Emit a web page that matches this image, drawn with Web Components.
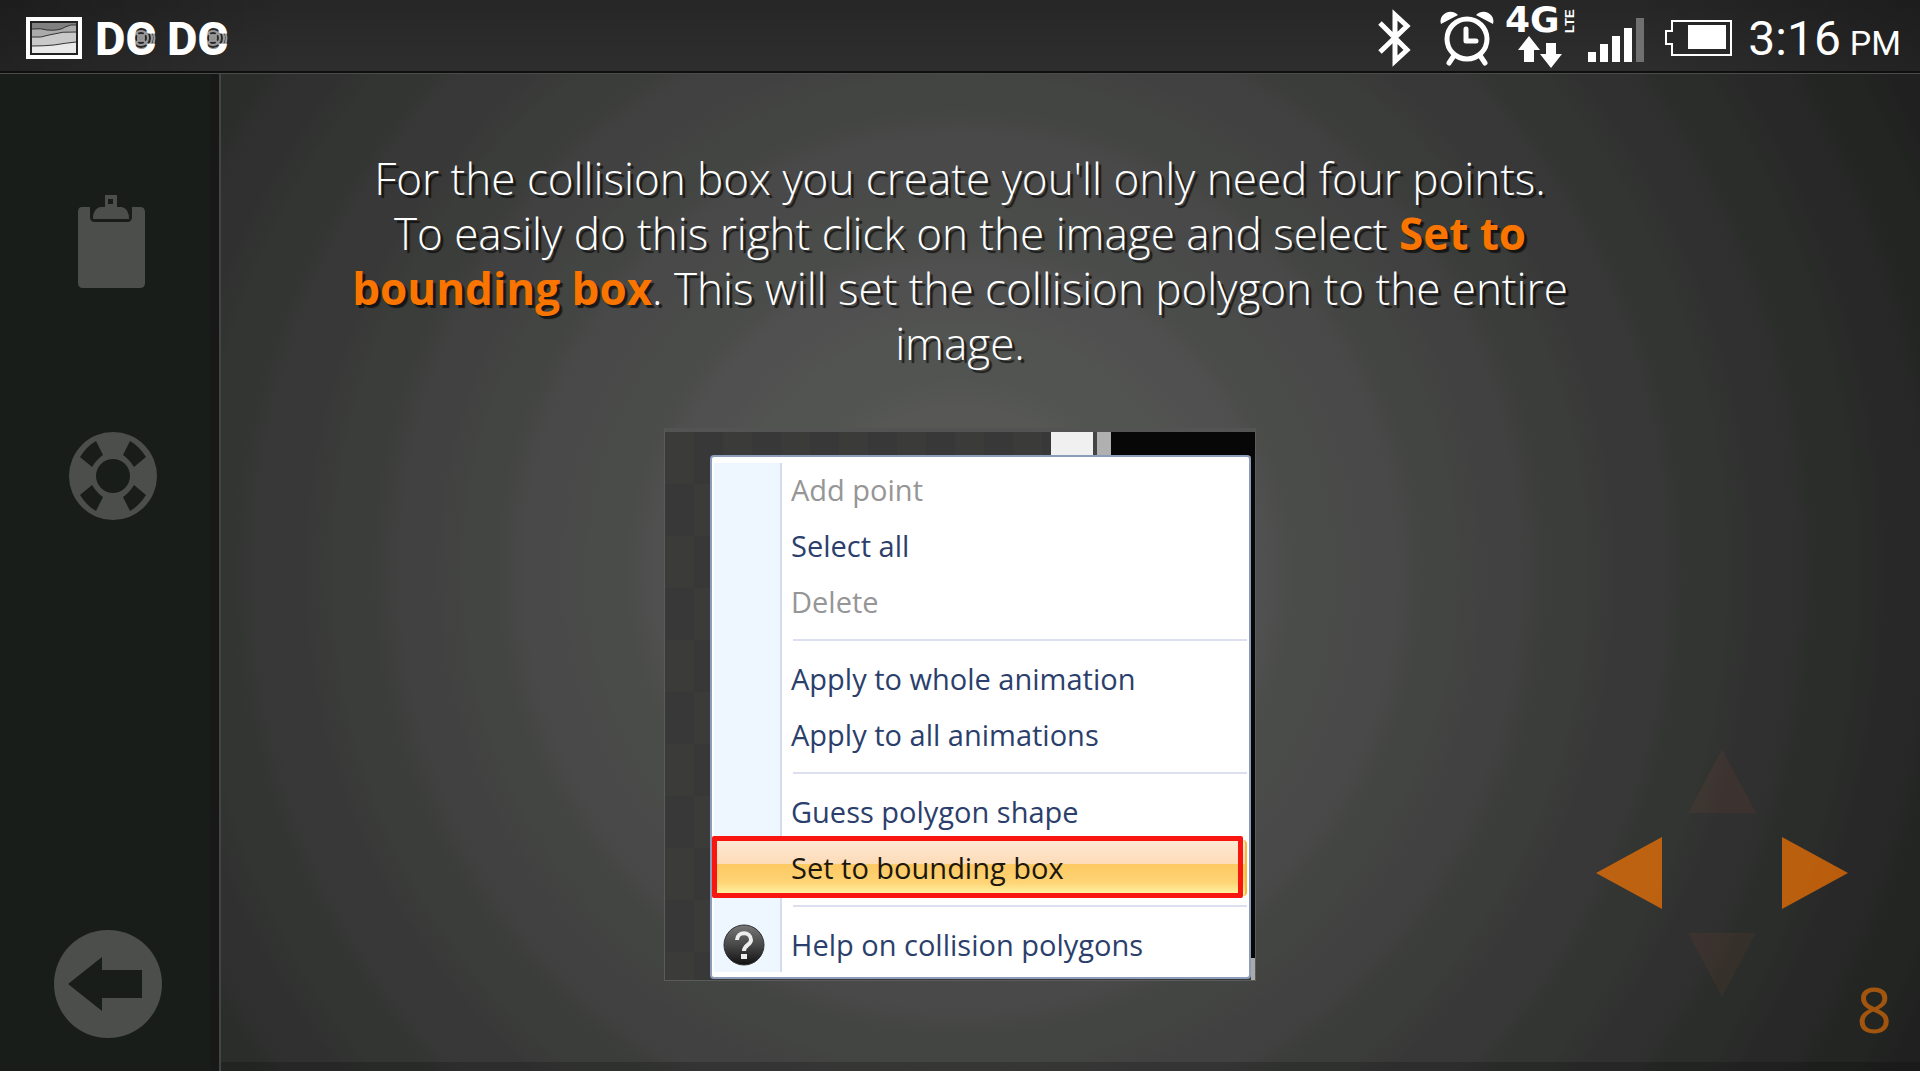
<!DOCTYPE html>
<html lang="en">
<head>
<meta charset="utf-8">
<title>Collision polygon tutorial</title>
<style>
	html, body { height: 100%; margin: 0; }

	body {
		background: white;
		box-sizing: border-box;
		display: flex;
		flex-direction: column;
		font-family: "Open Sans", "Noto Sans", sans-serif;
		padding-bottom: 9px;
	}
</style>
</head>
<body>
<status-bar time="3:16" period="PM"></status-bar>
<tutorial-stage>
	<tool-rail slot="rail"></tool-rail>
	<p>For the collision box you create you'll only need four points. To easily do this right click on the image and select <b>Set to bounding box</b>. This will set the collision polygon to the entire image.</p>
	<editor-shot>
		<menu-item disabled>Add point</menu-item>
		<menu-item>Select all</menu-item>
		<menu-item disabled>Delete</menu-item>
		<menu-line></menu-line>
		<menu-item>Apply to whole animation</menu-item>
		<menu-item>Apply to all animations</menu-item>
		<menu-line></menu-line>
		<menu-item>Guess polygon shape</menu-item>
		<menu-item marked>Set to bounding box</menu-item>
		<menu-line></menu-line>
		<menu-item help>Help on collision polygons</menu-item>
	</editor-shot>
	<page-pad slot="pad" page="8"></page-pad>
</tutorial-stage>

<script>
/**
 * Phone status bar: notifications on the left, system icons and clock on the right.
 * @attribute time   The clock digits
 * @attribute period AM or PM
 */
class StatusBar extends HTMLElement {
	constructor() {
		super();
		this.attachShadow({mode: 'open'});
		const logo = `
			<svg width="60" height="40" viewBox="0 0 60 40" fill="white" font-family="Roboto, sans-serif" font-weight="800" font-size="47">
				<g fill="none" stroke="#999" stroke-width="2">
					<circle cx="43" cy="20" r="3"/>
					<circle cx="43" cy="20" r="7"/>
					<circle cx="43" cy="20" r="11"/>
					<path d="M36 13l14 14M50 13L36 27M54 11q5 9 0 18"/>
				</g>
				<text x="-3" y="37">DC</text>
			</svg>`;
		this.shadowRoot.innerHTML = `
			<style>
				:host {
					align-items: center;
					background: linear-gradient(90deg, rgba(0,0,0,.25), transparent 15% 85%, rgba(0,0,0,.25)), linear-gradient(#262626, #2e2e2e);
					border-bottom: 2px solid #0e0f0e;
					box-sizing: border-box;
					color: white;
					display: flex;
					flex: none;
					font-family: Roboto, sans-serif;
					height: 73px;
					justify-content: space-between;
					padding: 4px 19px 0 26px;
				}

				div { align-items: center; display: flex; }
				svg { display: block; overflow: visible; }
				.left { gap: 12px; }
				.left svg:first-child { margin-right: 4px; }
				.clock { align-items: baseline; gap: 9px; margin-left: 16px; padding-top: 6px; }
				.time { font-size: 48px; line-height: 56px; }
				.period { font-size: 34px; line-height: 56px; }
			</style>
			<div class="left">
				<svg width="56" height="42" viewBox="0 0 56 42">
					<path fill="white" d="M0 0h56v42H0z"/>
					<path fill="#222" d="M4 4h48v34H4z"/>
					<path fill="#808080" d="M6 6h44v30H6z"/>
					<path fill="#aaa" d="M6 12q9-1 15 1 13 1 18-3 6-3 11-2v28H6z"/>
					<path fill="#c9c9c9" d="M6 20q9 1 17-2 14-4 27-3v21H6z"/>
					<path fill="#e9e9e9" d="M6 29q12 0 22-1 12-2 22-3v11H6z"/>
					<g fill="none" stroke="#333">
						<path d="M6 12q9-1 15 1 13 1 18-3 6-3 11-2M6 20q9 1 17-2 14-4 27-3M6 29q12 0 22-1 12-2 22-3"/>
					</g>
				</svg>
				${logo}
				${logo}
			</div>
			<div>
				<svg width="270" height="62" viewBox="1379 7 270 62" fill="white">
					<path fill="none" stroke="white" stroke-width="5" d="M1381 23l27 27-12 11V15l12 11-27 26"/>
					<circle cx="1468" cy="39" r="20" fill="none" stroke="white" stroke-width="5"/>
					<path fill="none" stroke="white" stroke-width="5" stroke-linecap="round" stroke-linejoin="round" d="M1467 29v12h10M1454 57l-4 6M1482 57l4 6"/>
					<path d="M1442 24c-3-9 9-17 17-9zM1494 24c3-9-9-17-17-9z"/>
					<text x="1506" y="32" font-family="DejaVu Sans" font-weight="700" font-size="36">4G</text>
					<text transform="translate(1575 33) rotate(-90)" font-family="Liberation Sans" font-weight="700" font-size="13">LTE</text>
					<path d="M1530 36l11 14h-6v12h-10V50h-6zM1552 68l-11-14h6V43h10v11h6z"/>
					<path d="M1589 52h8v10h-8zM1601 44h8v18h-8zM1613 36h8v26h-8zM1625 28h8v34h-8z"/>
					<path fill="#707070" d="M1637 18h8v44h-8z"/>
				</svg>
				<svg width="68" height="38" viewBox="1665 19 68 38" style="margin-left: 16px">
					<path fill="none" stroke="white" stroke-width="2" d="M1673 21h59v34h-59V44h-6V31h6z"/>
					<path fill="white" d="M1689 25h38v24h-38z"/>
				</svg>
				<div class="clock"><span class="time"></span><span class="period"></span></div>
			</div>
		`;
	}

	connectedCallback() {
		this.shadowRoot.querySelector('.time').textContent = this.getAttribute('time');
		this.shadowRoot.querySelector('.period').textContent = this.getAttribute('period');
	}
}

/**
 * The lit backdrop: a rail on the left, the slide in the middle, the pad on the right.
 */
class TutorialStage extends HTMLElement {
	/**
	 * Outer radius and colour of each ring of light
	 * @private
	 */
	#rings = [
		[179, '#575856'], [260, '#525451'], [320, '#505050'], [386, '#4a4c49'],
		[450, '#494949'], [510, '#434542'], [574, '#414141'], [641, '#3b3d3a'],
		[715, '#383838'], [780, '#323532'], [845, '#303030'], [910, '#2a2d2a'],
		[975, '#282828'], [1040, '#222522'], [1200, '#202020']
	];

	constructor() {
		super();
		this.attachShadow({mode: 'open'});
		// Each ring melts into the next one over 32px
		const stops = this.#rings.map(([r, color], i) => {
			const from = i ? this.#rings[i - 1][0] + 16 : 0;
			return `${color} ${from}px ${r - 16}px`;
		});
		this.shadowRoot.innerHTML = `
			<style>
				:host {
					background:
						linear-gradient(transparent calc(100% - 9px), rgba(0,0,0,.2) calc(100% - 9px)),
						radial-gradient(circle at 50% 50%, ${stops.join(', ')});
					border-top: 1px solid #4a4b4a;
					box-sizing: border-box;
					display: grid;
					flex: 1;
					grid-template-columns: 221px 1fr 221px;
					min-height: 0;
				}

				main {
					align-items: center;
					display: flex;
					flex-direction: column;
					gap: 57px;
					padding-top: 77px;
				}

				::slotted(p) {
					color: white;
					font-size: 44px;
					font-weight: 300;
					line-height: 55px;
					margin: 0;
					max-width: 1224px;
					text-align: center;
					text-shadow: 3px 3px 1px rgba(0,0,0,.65);
				}
			</style>
			<slot name="rail"></slot>
			<main><slot></slot></main>
			<slot name="pad"></slot>
		`;
		// The bold words sit inside the slotted paragraph, out of ::slotted's reach
		const bold = this.querySelector('b');
		if (bold) {
			bold.style.color = '#fa7500';
			bold.style.fontWeight = '700';
		}
	}
}

/**
 * Left rail with the notes, help and back buttons.
 */
class ToolRail extends HTMLElement {
	constructor() {
		super();
		this.attachShadow({mode: 'open'});
		this.shadowRoot.innerHTML = `
			<style>
				:host {
					background: linear-gradient(90deg, #191d1a calc(100% - 10px), #181818 calc(100% - 8px));
					border-right: 2px solid #434443;
					box-sizing: border-box;
					display: flex;
					flex-direction: column;
					padding: 120px 54px 33px;
				}

				button {
					background: none;
					border: 0;
					display: block;
					height: 108px;
					padding: 0;
					width: 108px;
				}

				.help { margin-top: 125px; }
				.back { margin-top: auto; }
				svg { display: block; fill: #4c4e4b; }
			</style>
			<button aria-label="Notes">
				<svg width="108" height="108" viewBox="54 194 108 108">
					<path fill-rule="evenodd" d="M82 207h8v10q0 5 5 5h32q5 0 5-5v-10h8q5 0 5 5v71q0 5-5 5H83q-5 0-5-5v-71q0-5 4-5z"/>
					<path fill-rule="evenodd" d="M105 195h12v12h5q7 2 7 12H93q0-10 7-12h5zM108 199v5h5v-5z"/>
				</svg>
			</button>
			<button class="help" aria-label="Help">
				<svg width="108" height="108" viewBox="-59 -49 108 108">
					<path fill-rule="evenodd" d="M-44 0a44 44 0 1 0 88 0a44 44 0 1 0-88 0M-17 0a17 17 0 1 0 34 0a17 17 0 1 0-34 0"/>
					<g fill="#191d1a">
						<path d="M17-35q9 5 16 16L21-9Q16-17 10-21z"/>
						<path d="M-17-35q-9 5-16 16l12 10Q-16-17-10-21z"/>
						<path d="M17 35q9-5 16-16L21 9Q16 17 10 21z"/>
						<path d="M-17 35q-9-5-16-16L-21 9Q-16 17-10 21z"/>
					</g>
				</svg>
			</button>
			<button class="back" aria-label="Back">
				<svg width="108" height="108" viewBox="-54 -54 108 108">
					<circle r="54"/>
					<path fill="#191d1a" d="M-40 0L-6-27v13h40v28H-6v13z"/>
				</svg>
			</button>
		`;
	}
}

/**
 * A framed shot of the editor with its context menu open.
 */
class EditorShot extends HTMLElement {
	constructor() {
		super();
		this.attachShadow({mode: 'open'});
		this.shadowRoot.innerHTML = `
			<style>
				:host {
					border: 1px solid #5a5b5a;
					border-top: 4px solid #525352;
					display: block;
				}

				.scene {
					background:
						linear-gradient(90deg, transparent 386px, #f0f0f0 386px 428px, #444 428px 432px, #b0b0b0 432px 446px, #070707 446px) no-repeat 0 0 / 100% 24px,
						linear-gradient(#080808 96%, #aaa 96%) no-repeat 100% 0 / 4px 100%,
						repeating-conic-gradient(#383838 0 25%, #3b3c3a 0 50%) 0 0 / 58px 104px;
					padding: 23px 4px 1px 45px;
				}

				.menu {
					background: linear-gradient(90deg, white 2px, #eef6ff 2px 68px, #d6dcf0 68px 70px, white 70px) no-repeat 0 6px / 100% 509px white;
					border: 2px solid #8d9cbb;
					border-radius: 4px;
					padding: 5px 0 4px;
					width: 537px;
				}
			</style>
			<div class="scene"><div class="menu" role="menu"><slot></slot></div></div>
		`;
	}
}

/**
 * One row of the context menu.
 * @attribute [disabled] Greys the row out
 * @attribute [marked]   Highlights the row and puts a red box round it
 * @attribute [help]     Shows the question mark
 */
class MenuItem extends HTMLElement {
	constructor() {
		super();
		this.attachShadow({mode: 'open'});
		this.shadowRoot.innerHTML = `
			<style>
				:host { display: block; position: relative; }

				button {
					align-items: center;
					background: none;
					border: 0;
					color: #2c3f6c;
					display: grid;
					font: 400 29px/56px "Open Sans", "Noto Sans", sans-serif;
					grid-template-columns: 64px 1fr;
					height: 56px;
					justify-items: center;
					padding: 0;
					text-align: left;
					width: 100%;
				}

				span { justify-self: start; padding-left: 15px; }
				svg { display: none; }
				button:disabled { color: #969696; }
				:host([help]) svg { display: block; }

				:host([marked]) button {
					background: linear-gradient(#fde9d5, #fddcb8 42%, #fdc962 43%, #fed375 75%, #fff1a0 95%);
					border-right: 2px solid #ffb937;
					border-radius: 4px;
					color: #1c1710;
					width: calc(100% - 2px);
				}

				:host([marked])::after {
					border: 5px solid #f91510;
					border-radius: 2px;
					content: "";
					inset: -4px 6px -2px 0;
					position: absolute;
				}
			</style>
			<button role="menuitem">
				<svg width="42" height="42" viewBox="-21 -21 42 42">
					<linearGradient id="ball" x2="0" y2="1"><stop stop-color="#777"/><stop offset=".5" stop-color="#484848"/><stop offset="1" stop-color="#111"/></linearGradient>
					<circle r="20" fill="url(#ball)" stroke="#333"/>
					<path fill="none" stroke="#eee" stroke-width="4" d="M-7-5C-7-14 7-14 7-5 7 0 0 0 0 6"/>
					<path fill="#eee" d="M-3 9h6v5h-6z"/>
				</svg>
				<i></i>
				<span><slot></slot></span>
			</button>
		`;
	}

	connectedCallback() {
		const root = this.shadowRoot;
		root.querySelector('button').disabled = this.hasAttribute('disabled');
		// Only one of the two fills the icon column
		root.querySelector(this.hasAttribute('help') ? 'i' : 'svg').remove();
	}
}

/**
 * Rule between two groups of menu rows.
 */
class MenuLine extends HTMLElement {
	constructor() {
		super();
		this.attachShadow({mode: 'open'});
		this.shadowRoot.innerHTML = `
			<style>
				:host { display: block; padding: 9px 2px 10px 81px; }
				hr { background: #dcdff0; border: 0; height: 2px; margin: 0; }
			</style>
			<hr>
		`;
	}
}

/**
 * Four-way pad with the page number under it.
 * @attribute page The page number
 */
class PagePad extends HTMLElement {
	constructor() {
		super();
		this.attachShadow({mode: 'open'});
		this.shadowRoot.innerHTML = `
			<style>
				:host {
					align-items: flex-end;
					display: flex;
					flex-direction: column;
					justify-content: flex-end;
					padding-bottom: 38px;
				}

				.pad {
					display: grid;
					gap: 24px 26px;
					grid-template-areas: ". up ." "left . right" ". down .";
					grid-template-columns: 66px 68px 66px;
					grid-template-rows: 64px 72px 64px;
					margin-right: 72px;
				}

				button { background: #ff7800; border: 0; opacity: .68; padding: 0; }
				button:disabled { background: #ff6a30; opacity: .06; }
				.up { clip-path: polygon(50% 0, 100% 100%, 0 100%); grid-area: up; }
				.left { clip-path: polygon(0 50%, 100% 0, 100% 100%); grid-area: left; }
				.right { clip-path: polygon(0 0, 100% 50%, 0 100%); grid-area: right; }
				.down { clip-path: polygon(0 0, 100% 0, 50% 100%); grid-area: down; }

				output {
					color: #ff7800;
					font-size: 62px;
					font-weight: 400;
					line-height: 48px;
					margin: -12px 28px 0 0;
					opacity: .58;
				}
			</style>
			<div class="pad">
				<button class="up" aria-label="Up" disabled></button>
				<button class="left" aria-label="Previous"></button>
				<button class="right" aria-label="Next"></button>
				<button class="down" aria-label="Down" disabled></button>
			</div>
			<output></output>
		`;
	}

	connectedCallback() {
		this.shadowRoot.querySelector('output').textContent = this.getAttribute('page');
	}
}

customElements.define('status-bar', StatusBar);
customElements.define('tutorial-stage', TutorialStage);
customElements.define('tool-rail', ToolRail);
customElements.define('editor-shot', EditorShot);
customElements.define('menu-item', MenuItem);
customElements.define('menu-line', MenuLine);
customElements.define('page-pad', PagePad);
</script>
</body>
</html>
